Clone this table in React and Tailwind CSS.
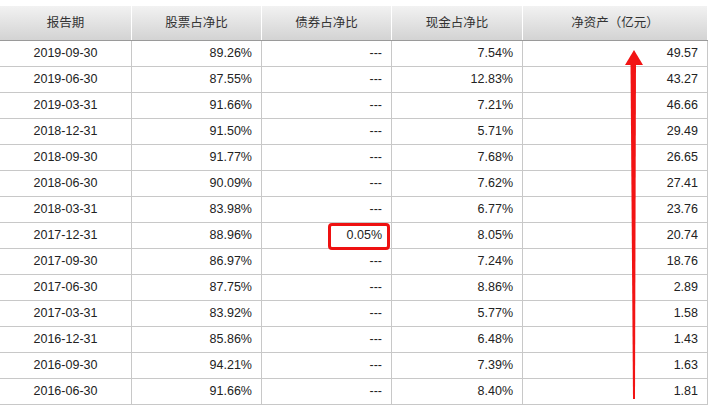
import React from "react";

const rows = [
  ["2019-09-30", "89.26%", "---", "7.54%", "49.57"],
  ["2019-06-30", "87.55%", "---", "12.83%", "43.27"],
  ["2019-03-31", "91.66%", "---", "7.21%", "46.66"],
  ["2018-12-31", "91.50%", "---", "5.71%", "29.49"],
  ["2018-09-30", "91.77%", "---", "7.68%", "26.65"],
  ["2018-06-30", "90.09%", "---", "7.62%", "27.41"],
  ["2018-03-31", "83.98%", "---", "6.77%", "23.76"],
  ["2017-12-31", "88.96%", "0.05%", "8.05%", "20.74"],
  ["2017-09-30", "86.97%", "---", "7.24%", "18.76"],
  ["2017-06-30", "87.75%", "---", "8.86%", "2.89"],
  ["2017-03-31", "83.92%", "---", "5.77%", "1.58"],
  ["2016-12-31", "85.86%", "---", "6.48%", "1.43"],
  ["2016-09-30", "94.21%", "---", "7.39%", "1.63"],
  ["2016-06-30", "91.66%", "---", "8.40%", "1.81"],
];

const headers = ["报告期", "股票占净比", "债券占净比", "现金占净比", "净资产（亿元）"];
const widths = ["w-[132px]", "w-[130px]", "w-[130px]", "w-[131px]", "w-[185px]"];

export default function App() {
  return (
    <div className="relative w-[710px] h-[415px] bg-white overflow-hidden pt-[6px]">
      <div className="flex flex-col w-[708px]">
        <div className="flex h-[35px] border-b border-[#9a9a9a] bg-gradient-to-b from-[#f2f2f2] to-[#d3d3d3]">
          {headers.map((h, i) => (
            <div
              key={i}
              className={`${widths[i]} flex items-center justify-center border-r border-white text-[12.5px] text-[#333] [font-family:'Noto_Sans_CJK_SC',sans-serif] pb-[1px]`}
            >
              {h}
            </div>
          ))}
        </div>
        {rows.map((r, ri) => (
          <div key={ri} className="flex h-[26px] border-b border-[#c8c8c8]">
            {r.map((c, ci) => (
              <div
                key={ci}
                className={`${widths[ci]} relative flex items-center border-r border-[#c8c8c8] text-[12.5px] text-[#222] [font-family:'Liberation_Sans',Arial,sans-serif] ${
                  ci === 0 ? "justify-center" : "justify-end pr-[9px]"
                }`}
              >
                {c}
                {ri === 7 && ci === 2 && (
                  <div className="absolute top-0 right-[1px] w-[62px] h-[27px] border-[3px] border-[#ee1111] rounded-[4px]" />
                )}
              </div>
            ))}
          </div>
        ))}
      </div>
      <svg className="absolute left-0 top-0" width="710" height="415">
        <polygon points="630.5,62 636,62 635,399 633,399" fill="#f21414" />
        <polygon points="634,50 625,65 643,65" fill="#f21414" />
      </svg>
    </div>
  );
}
